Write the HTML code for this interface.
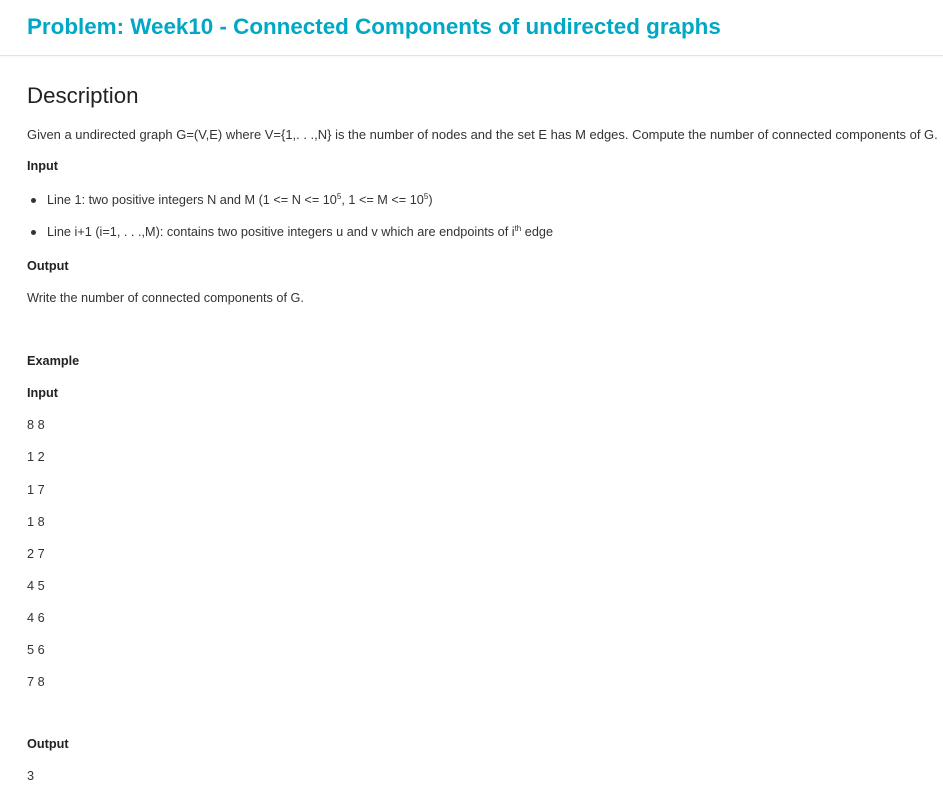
<!DOCTYPE html>
<html><head><meta charset="utf-8"><style>
body{margin:0;background:#fff;width:943px;height:794px;overflow:hidden;font-family:"Liberation Sans",sans-serif;color:#333;}
.hdr{position:absolute;left:0;top:0;width:943px;height:55px;border-bottom:1px solid #e3e3e3;box-shadow:0 1px 2px rgba(0,0,0,0.04);}
.hdr h1{position:absolute;left:27px;top:14px;margin:0;font-size:22.4px;font-weight:bold;color:#00a8c5;white-space:nowrap;}
.t{position:absolute;left:27px;white-space:nowrap;font-size:12.7px;line-height:16px;color:#333;}
.b{font-weight:bold;color:#222;}
.h2{position:absolute;left:27px;top:83px;font-size:22.3px;color:#222;}
.li{left:47px;}
.dot{position:absolute;left:31px;width:5px;height:5px;border-radius:50%;background:#333;}
sup{font-size:8px;line-height:0;}
</style></head><body>
<div class="hdr"><h1>Problem: Week10 - Connected Components of undirected graphs</h1></div>
<div class="h2">Description</div>
<div class="t" style="top:127px;font-size:12.97px">Given a undirected graph G=(V,E) where V={1,. . .,N} is the number of nodes and the set E has M edges. Compute the number of connected components of G.</div>
<div class="t b" style="top:158px">Input</div>
<div class="dot" style="top:198px"></div>
<div class="t li" style="top:192px">Line 1: two positive integers N and M (1 &lt;= N &lt;= 10<sup>5</sup>, 1 &lt;= M &lt;= 10<sup>5</sup>)</div>
<div class="dot" style="top:230px"></div>
<div class="t li" style="top:224px">Line i+1 (i=1, . . .,M): contains two positive integers u and v which are endpoints of i<sup>th</sup> edge</div>
<div class="t b" style="top:258px">Output</div>
<div class="t" style="top:290px">Write the number of connected components of G.</div>
<div class="t b" style="top:353px">Example</div>
<div class="t b" style="top:385px">Input</div>
<div class="t" style="top:417px">8 8</div>
<div class="t" style="top:449px">1 2</div>
<div class="t" style="top:482px">1 7</div>
<div class="t" style="top:514px">1 8</div>
<div class="t" style="top:546px">2 7</div>
<div class="t" style="top:578px">4 5</div>
<div class="t" style="top:610px">4 6</div>
<div class="t" style="top:642px">5 6</div>
<div class="t" style="top:674px">7 8</div>
<div class="t b" style="top:736px">Output</div>
<div class="t" style="top:768px">3</div>
</body></html>
